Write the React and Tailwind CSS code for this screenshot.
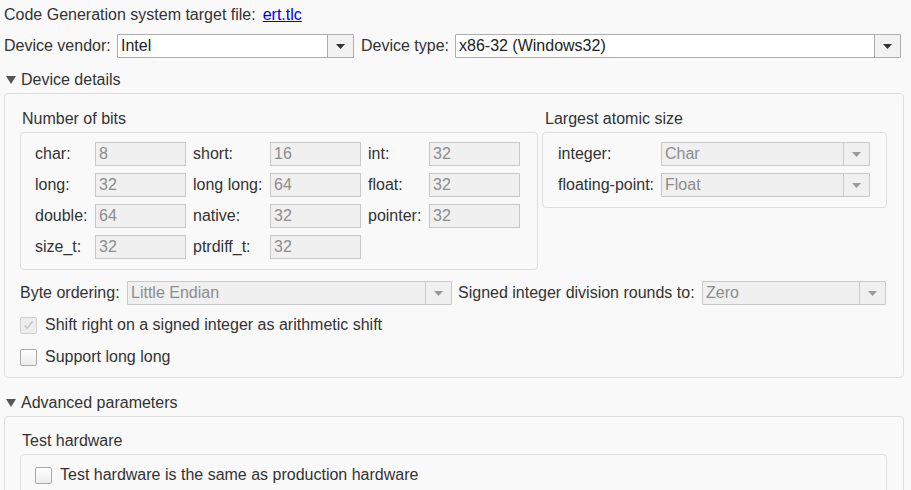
import React from "react";

/* Embedded Coder hardware implementation pane
 * Flat grey dialog: vendor/type selects, device details, advanced params.
 */

const Caret = ({ disabled }) => (
  <svg width="9" height="5" viewBox="0 0 9 5">
    <path d="M0 0 H9 L4.5 5 Z" fill={disabled ? "#9a9a9a" : "#333"} />
  </svg>
);

const Select = ({ value, width, disabled }) => (
  <div
    className={`flex h-6 border rounded-[1px] ${width} ${
      disabled ? "bg-[#f0f0f0] border-[#c9c9c9] text-[#8d8d8d]" : "bg-white border-[#adadad] text-[#222]"
    }`}
  >
    <div className="flex-1 flex items-center pl-[3px] leading-none truncate">{value}</div>
    <div
      className={`w-[26px] flex items-center justify-center border-l ${
        disabled ? "border-[#c9c9c9] bg-[#f0f0f0]" : "border-[#adadad] bg-[#f2f2f2]"
      }`}
    >
      <Caret disabled={disabled} />
    </div>
  </div>
);

const Field = ({ label, value, labelW }) => (
  <div className="flex items-center h-6">
    <span className={labelW}>{label}</span>
    <div className="w-[91px] h-6 flex items-center pl-[3px] bg-[#f0f0f0] border border-[#c9c9c9] text-[#8d8d8d] leading-none">
      {value}
    </div>
  </div>
);

const Check = ({ checked, disabled }) => (
  <div
    className={`w-[17px] h-[17px] rounded-[2px] border flex items-center justify-center ${
      disabled ? "border-[#d0d0d0] bg-[#ededed]" : "border-[#a9a9a9] bg-gradient-to-b from-white to-[#ececec]"
    }`}
  >
    {checked && (
      <svg width="11" height="10" viewBox="0 0 11 10">
        <path d="M1.5 5.5 L4.2 8.2 L9.5 1.5" stroke="#c4c4c4" strokeWidth="1.4" fill="none" />
      </svg>
    )}
  </div>
);

const Toggle = ({ label }) => (
  <div className="flex items-center h-[18px] pl-[6px] gap-[5px]">
    <svg width="10" height="8" viewBox="0 0 10 8">
      <path d="M0 0 H10 L5 8 Z" fill="#555" />
    </svg>
    <span>{label}</span>
  </div>
);

export default function App() {
  return (
    <div className="w-[911px] h-[490px] overflow-hidden bg-[#f9f9f9] text-[16px] leading-[18px] text-[#333] font-['Liberation_Sans',Arial,sans-serif]">
      <div className="pl-1 pt-[6px] h-[18px] box-content flex gap-[7px]">
        <span>Code Generation system target file:</span>
        <span className="text-[#0000ee] underline">ert.tlc</span>
      </div>

      <div className="flex items-center pl-1 mt-[10px]">
        <span className="w-[113px]">Device vendor:</span>
        <Select value="Intel" width="w-[237px]" />
        <span className="ml-[7px] w-[94px]">Device type:</span>
        <Select value="x86-32 (Windows32)" width="w-[446px]" />
      </div>

      <div className="mt-[13px]">
        <Toggle label="Device details" />
      </div>

      <div className="ml-1 mt-[4px] w-[900px] h-[285px] border border-[#dedede] rounded-[4px] pl-[15px] pt-[16px]">
        <div className="flex gap-[4px]">
          <div className="flex flex-col">
            <div className="pl-[2px] h-[18px] mb-[4px]">Number of bits</div>
            <div className="w-[518px] h-[138px] border border-[#dedede] rounded-[4px] pl-[14px] pt-[9px] flex flex-col gap-[7px]">
              <div className="flex gap-[7px]">
                <Field label="char:" value="8" labelW="w-[60px]" />
                <Field label="short:" value="16" labelW="w-[77px]" />
                <Field label="int:" value="32" labelW="w-[61px]" />
              </div>
              <div className="flex gap-[7px]">
                <Field label="long:" value="32" labelW="w-[60px]" />
                <Field label="long long:" value="64" labelW="w-[77px]" />
                <Field label="float:" value="32" labelW="w-[61px]" />
              </div>
              <div className="flex gap-[7px]">
                <Field label="double:" value="64" labelW="w-[60px]" />
                <Field label="native:" value="32" labelW="w-[77px]" />
                <Field label="pointer:" value="32" labelW="w-[61px]" />
              </div>
              <div className="flex gap-[7px]">
                <Field label="size_t:" value="32" labelW="w-[60px]" />
                <Field label="ptrdiff_t:" value="32" labelW="w-[77px]" />
              </div>
            </div>
          </div>
          <div className="flex flex-col">
            <div className="pl-[3px] h-[18px] mb-[4px]">Largest atomic size</div>
            <div className="w-[345px] h-[76px] border border-[#dedede] rounded-[4px] pl-[15px] pt-[9px] flex flex-col gap-[7px]">
              <div className="flex items-center">
                <span className="w-[103px]">integer:</span>
                <Select value="Char" width="w-[209px]" disabled />
              </div>
              <div className="flex items-center">
                <span className="w-[103px]">floating-point:</span>
                <Select value="Float" width="w-[209px]" disabled />
              </div>
            </div>
          </div>
        </div>

        <div className="flex items-center mt-[11px]">
          <span className="w-[107px]">Byte ordering:</span>
          <Select value="Little Endian" width="w-[325px]" disabled />
          <span className="ml-[6px] w-[244px]">Signed integer division rounds to:</span>
          <Select value="Zero" width="w-[184px]" disabled />
        </div>

        <div className="flex items-center gap-2 mt-[11px]">
          <Check checked disabled />
          <span>Shift right on a signed integer as arithmetic shift</span>
        </div>
        <div className="flex items-center gap-2 mt-[14px]">
          <Check />
          <span>Support long long</span>
        </div>
      </div>

      <div className="mt-[16px]">
        <Toggle label="Advanced parameters" />
      </div>

      <div className="ml-1 mt-[4px] w-[900px] h-[120px] border border-[#dedede] rounded-[4px] pl-[15px] pt-[15px]">
        <div className="pl-[2px] h-[18px] mb-[4px]">Test hardware</div>
        <div className="w-[867px] h-[60px] border border-[#dedede] rounded-[4px] pl-[14px] pt-[11px]">
          <div className="flex items-center gap-2">
            <Check />
            <span>Test hardware is the same as production hardware</span>
          </div>
        </div>
      </div>
    </div>
  );
}
